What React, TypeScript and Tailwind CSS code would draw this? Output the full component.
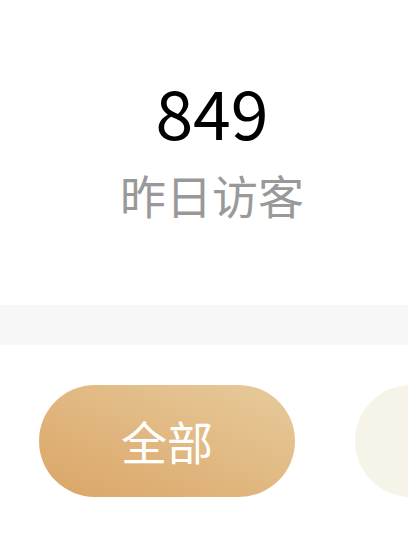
export default function App() {
  return (
    <div className="w-[408px] h-[533px] overflow-hidden bg-white font-['Noto_Sans_CJK_SC',sans-serif]">
      {/* Yesterday's visitors */}
      <div className="h-[305px] flex flex-col items-center pl-4 pt-[71px]">
        <div className="text-[68px] leading-[80px] text-black">849</div>
        <div className="text-[46px] leading-[60px] text-[#999999] mt-[13px]">昨日访客</div>
      </div>

      <div className="h-10 bg-[#f7f7f7]" />

      {/* Filter pills */}
      <div className="flex gap-[60px] pl-[39px] pt-10 overflow-hidden">
        <button className="shrink-0 w-64 h-28 rounded-full bg-gradient-to-tr from-[#daa566] to-[#e7cb9c] text-white text-[46px] leading-none pb-[3px]">
          全部
        </button>
        <button className="shrink-0 w-64 h-28 rounded-full bg-[#f6f3e9]" />
      </div>
    </div>
  );
}
